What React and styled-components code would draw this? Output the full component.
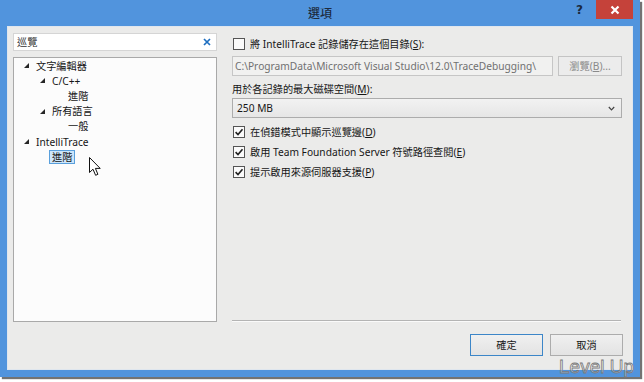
import React from "react";
import styled, { createGlobalStyle } from "styled-components";

const GlobalStyle = createGlobalStyle`
  * {
    box-sizing: border-box;
  }
  body {
    margin: 0;
    background: #ffffff;
    font-family: "Noto Sans", "Noto Sans CJK TC", sans-serif;
    font-size: 10.2px;
    line-height: 1.2;
    color: #161616;
  }
`;

const treeItems = [
  { label: "文字編輯器", level: 0, open: true },
  { label: "C/C++", level: 1, open: true },
  { label: "進階", level: 2 },
  { label: "所有語言", level: 1, open: true },
  { label: "一般", level: 2 },
  { label: "IntelliTrace", level: 0, open: true },
  { label: "進階", level: 1, selected: true },
];

const options = [
  { label: "在偵錯模式中顯示巡覽邊", key: "D" },
  { label: "啟用 Team Foundation Server 符號路徑查閱", key: "E" },
  { label: "提示啟用來源伺服器支援", key: "P" },
];

const Check = ({ checked }) => (
  <CheckBox>
    {checked && (
      <svg width="10" height="10" viewBox="0 0 10 10">
        <path d="M1.6 5.1 L4 7.6 L8.5 2.2" fill="none" stroke="#222" strokeWidth="1.6" />
      </svg>
    )}
  </CheckBox>
);

const Hotkey = ({ k }) => (
  <>
    (<u>{k}</u>)
  </>
);

const App = () => {
  return (
    <Page>
      <GlobalStyle />
      <Window>
        <TitleBar>
          <span />
          <Title>選項</Title>
          <TitleActions>
            <HelpMark>?</HelpMark>
            <CloseButton>
              <svg width="10" height="10" viewBox="0 0 10 10">
                <path d="M1.5 1.5 L8.5 8.5 M8.5 1.5 L1.5 8.5" stroke="#fff" strokeWidth="2.2" />
              </svg>
            </CloseButton>
          </TitleActions>
        </TitleBar>
        <Client>
          <LeftPane>
            <SearchBox>
              <span>巡覽</span>
              <svg width="8" height="8" viewBox="0 0 8 8">
                <path d="M1 1 L7 7 M7 1 L1 7" stroke="#1e6fc0" strokeWidth="1.7" />
              </svg>
            </SearchBox>
            <Tree>
              {treeItems.map((item, idx) => (
                <TreeRow key={idx} $level={item.level}>
                  <Arrow>
                    {item.open && (
                      <svg width="5" height="5" viewBox="0 0 5 5">
                        <polygon points="5,0 5,5 0,5" fill="#262626" />
                      </svg>
                    )}
                  </Arrow>
                  <TreeLabel $selected={item.selected}>
                    {item.label}
                    {item.selected && (
                      <Cursor width="13" height="20" viewBox="0 0 13 20">
                        <path
                          d="M0.5 0.5 L0.5 15.5 L4 12.2 L6.6 18.3 L8.9 17.3 L6.4 11.4 L11.2 11.4 Z"
                          fill="#fff"
                          stroke="#111"
                          strokeWidth="1"
                          strokeLinejoin="round"
                        />
                      </Cursor>
                    )}
                  </TreeLabel>
                </TreeRow>
              ))}
            </Tree>
          </LeftPane>
          <RightPane>
            <OptionRow>
              <Check />
              <span>
                將 IntelliTrace 記錄儲存在這個目錄<Hotkey k="S" />:
              </span>
            </OptionRow>
            <PathRow>
              <PathField>C:\ProgramData\Microsoft Visual Studio\12.0\TraceDebugging\</PathField>
              <BrowseButton>
                瀏覽<Hotkey k="B" />...
              </BrowseButton>
            </PathRow>
            <FieldLabel>
              用於各記錄的最大磁碟空間<Hotkey k="M" />:
            </FieldLabel>
            <Select>
              <span>250 MB</span>
              <svg width="7" height="5" viewBox="0 0 7 5">
                <path d="M0.8 1 L3.5 3.8 L6.2 1" fill="none" stroke="#444" strokeWidth="1.2" />
              </svg>
            </Select>
            <OptionList>
              {options.map((o) => (
                <OptionRow key={o.key}>
                  <Check checked />
                  <span>
                    {o.label}
                    <Hotkey k={o.key} />
                  </span>
                </OptionRow>
              ))}
            </OptionList>
            <Separator />
            <ButtonRow>
              <DialogButton $primary>確定</DialogButton>
              <DialogButton>取消</DialogButton>
            </ButtonRow>
          </RightPane>
        </Client>
      </Window>
      <Watermark>Level Up</Watermark>
    </Page>
  );
};

export default App;

const Page = styled.div`
  position: relative;
  width: 644px;
  height: 382px;
  overflow: hidden;
`;

const Window = styled.div`
  width: 640px;
  height: 377px;
  background: #5194dd;
  display: flex;
  flex-direction: column;
  box-shadow: 2px 2px 1px rgba(0, 0, 0, 0.55);
`;

const TitleBar = styled.div`
  height: 26px;
  flex-shrink: 0;
  display: grid;
  grid-template-columns: 1fr auto 1fr;
  align-items: start;
`;

const Title = styled.div`
  font-family: "Noto Sans CJK TC", sans-serif;
  font-size: 12px;
  font-weight: 500;
  line-height: 26px;
  color: #1d2b3d;
`;

const TitleActions = styled.div`
  display: flex;
  justify-content: flex-end;
  align-items: flex-start;
`;

const HelpMark = styled.span`
  font-family: "DejaVu Sans", sans-serif;
  font-weight: bold;
  font-size: 12px;
  line-height: 20px;
  color: #1b2a3e;
  margin-right: 13px;
`;

const CloseButton = styled.div`
  width: 37px;
  height: 19px;
  margin-right: 7px;
  background: #c5423a;
  display: flex;
  align-items: center;
  justify-content: center;
`;

const Client = styled.div`
  flex: 1;
  min-height: 0;
  margin: 0 7px 7px 7px;
  background: #ebebea;
  border: 1px solid #dfe6ee;
  display: grid;
  grid-template-columns: 204px minmax(0, 1fr);
  column-gap: 15px;
  padding: 6px 10px 0 5px;
`;

const LeftPane = styled.div`
  display: flex;
  flex-direction: column;
  gap: 6px;
`;

const SearchBox = styled.div`
  height: 18px;
  background: #fff;
  border: 1px solid #d5d5d5;
  display: flex;
  align-items: center;
  justify-content: space-between;
  padding: 0 5px 0 3px;
  color: #333;
`;

const Tree = styled.div`
  height: 265px;
  background: #fcfcfc;
  border: 1px solid #a9a9a9;
`;

const TreeRow = styled.div`
  height: 15.2px;
  display: flex;
  align-items: center;
  padding-left: ${(p) => 10 + p.$level * 16}px;
`;

const Arrow = styled.span`
  width: 12px;
  display: flex;
  align-items: center;
`;

const TreeLabel = styled.span`
  position: relative;
  line-height: 12px;
  padding: 0 2px;
  margin-left: -3px;
  border: 1px solid ${(p) => (p.$selected ? "#5aa0dc" : "transparent")};
  background: ${(p) => (p.$selected ? "#cde6fa" : "transparent")};
`;

const Cursor = styled.svg`
  position: absolute;
  left: 39px;
  top: 6px;
`;

const RightPane = styled.div`
  display: flex;
  flex-direction: column;
  padding-top: 1px;
`;

const OptionRow = styled.label`
  display: flex;
  align-items: center;
  gap: 5px;
  height: 20px;
  white-space: nowrap;
`;

const CheckBox = styled.span`
  width: 12px;
  height: 12px;
  margin-left: 1px;
  border: 1px solid #555;
  background: #fbfbfb;
  display: flex;
  align-items: center;
  justify-content: center;
  flex-shrink: 0;
`;

const PathRow = styled.div`
  display: flex;
  gap: 5px;
  margin-top: 2px;
`;

const PathField = styled.div`
  flex: 1;
  min-width: 0;
  height: 20px;
  line-height: 18px;
  background: #f1f1f0;
  border: 1px solid #c6c6c6;
  padding-left: 2px;
  color: #707070;
  white-space: nowrap;
  overflow: hidden;
`;

const BrowseButton = styled.div`
  width: 64px;
  height: 20px;
  border: 1px solid #c4c4c4;
  background: #ececec;
  color: #8a8a8a;
  text-align: center;
  line-height: 18px;
`;

const FieldLabel = styled.div`
  margin-top: 4px;
  height: 18px;
  line-height: 18px;
`;

const Select = styled.div`
  height: 20px;
  border: 1px solid #acacac;
  background: linear-gradient(#f2f2f2, #e6e6e6);
  display: flex;
  align-items: center;
  justify-content: space-between;
  padding: 0 6px 0 4px;
`;

const OptionList = styled.div`
  display: flex;
  flex-direction: column;
  margin-top: 4px;
  flex: 1;
`;

const Separator = styled.div`
  height: 2px;
  border-top: 1px solid #b4b4b4;
  border-bottom: 1px solid #fafafa;
  margin-right: 1px;
`;

const ButtonRow = styled.div`
  display: flex;
  justify-content: flex-end;
  gap: 7px;
  margin: 12px -1px 13px 0;
`;

const DialogButton = styled.div`
  width: 73px;
  height: 22px;
  line-height: 20px;
  text-align: center;
  background: linear-gradient(#f0f0f0, #e3e3e3);
  border: 1px solid ${(p) => (p.$primary ? "#3c86c8" : "#acacac")};
`;

const Watermark = styled.div`
  position: absolute;
  left: 559px;
  top: 356px;
  font-family: "Liberation Sans", sans-serif;
  font-size: 19px;
  line-height: 22px;
  color: rgba(255, 255, 255, 0.35);
  -webkit-text-stroke: 0.8px #7a7a7a;
`;
